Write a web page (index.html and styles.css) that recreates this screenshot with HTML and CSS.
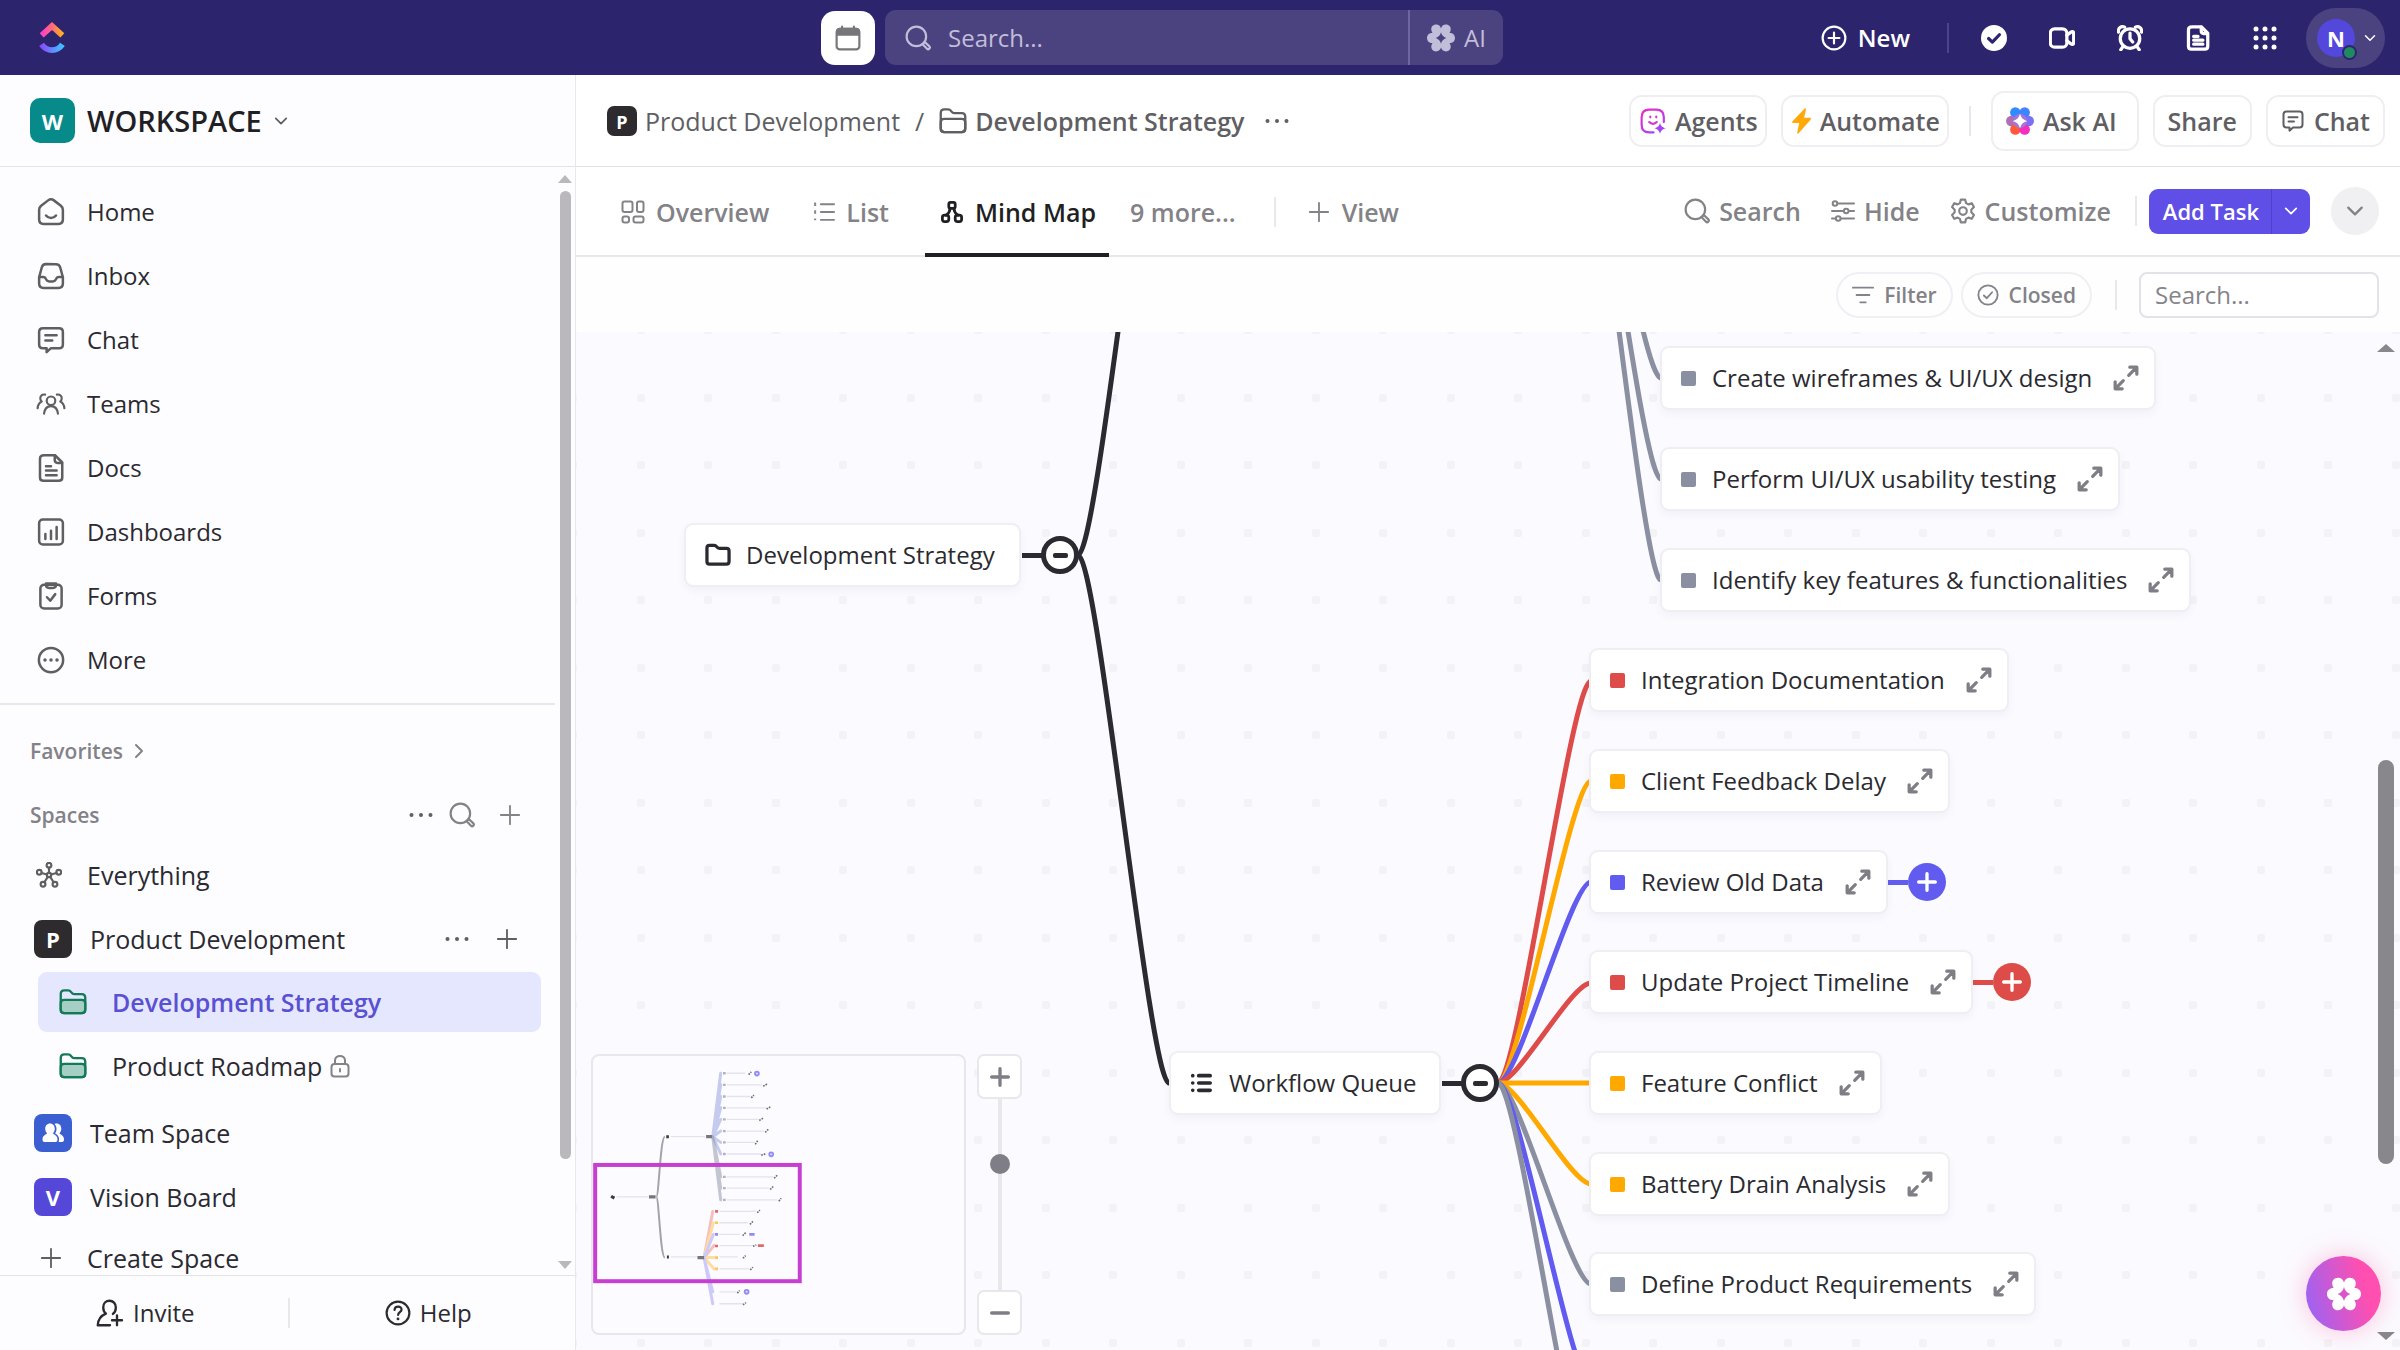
FILE: index.html
```
<!DOCTYPE html>
<html lang="en">
<head>
<meta charset="utf-8">
<title>Development Strategy</title>
<meta name="viewport" content="width=device-width, initial-scale=1">
<link rel="stylesheet" href="styles.css">
</head>
<body>
<svg class="sprite" aria-hidden="true">
  <defs>
    <linearGradient id="logo-top" x1="0" y1="0" x2="1" y2="0"><stop offset="0" stop-color="#ff3fc8"/><stop offset=".5" stop-color="#ff6a7a"/><stop offset="1" stop-color="#ffb21c"/></linearGradient>
    <linearGradient id="logo-bottom" x1="0" y1="0" x2="1" y2="0"><stop offset="0" stop-color="#8a4bff"/><stop offset="1" stop-color="#3fc0ff"/></linearGradient>
    <linearGradient id="agent" x1="0" y1="0" x2=".6" y2="1"><stop offset="0" stop-color="#f02bc0"/><stop offset="1" stop-color="#a445f2"/></linearGradient>
    <symbol id="i-home" viewBox="0 0 24 24"><path d="M2.5 10.2c0-1.4.5-2.3 1.6-3.2l5.6-4.3c1.5-1.1 3.1-1.1 4.6 0L19.900 7c1.100.9 1.600 1.800 1.600 3.200V18c0 2.600-1 3.500-3.500 3.500H6c-2.500 0-3.500-.9-3.500-3.500z"/><path d="M8 14.800c2 2.600 6 2.600 8 0"/></symbol>
    <symbol id="i-inbox" viewBox="0 0 24 24"><path d="M2.500 13 4.600 5.200C5.100 3.300 6 2.500 8 2.500h8c2 0 2.900.8 3.400 2.700L21.500 13v5c0 2.600-1 3.500-3.500 3.500H6c-2.500 0-3.500-.9-3.500-3.500z"/><path d="M2.500 12.800h3.200c1.300 0 1.900.6 2.300 1.700.5 1.200 1.200 1.800 2.500 1.800h3c1.300 0 2-.6 2.500-1.800.4-1.100 1-1.700 2.300-1.700h3.200"/></symbol>
    <symbol id="i-chat" viewBox="0 0 24 24"><path d="M5.500 2.500h13c2 0 3 1 3 3v10c0 2-1 3-3 3H12l-3.500 3.200v-3.200h-3c-2 0-3-1-3-3v-10c0-2 1-3 3-3z"/><path d="M7.500 8.200h9M7.500 12.400h5.500"/></symbol>
    <symbol id="i-teams" viewBox="0 0 28 24"><circle cx="14" cy="9" r="4"/><path d="M7.500 21c.6-4.600 3-7 6.500-7s5.900 2.400 6.500 7M8.500 3.200C5.500 2.800 3.800 4.500 4 7c.1 1.200.6 2 1.300 2.700C3 10.800 1.800 12.800 1.500 16M19.500 3.200C22.500 2.800 24.200 4.500 24 7c-.1 1.200-.6 2-1.300 2.700 2.300 1.100 3.500 3.100 3.800 6.300"/></symbol>
    <symbol id="i-doc" viewBox="0 0 24 24"><path d="M6.500 1.800h8.700L21 7.600v11.900c0 1.900-.9 2.700-2.800 2.700H6c-1.900 0-2.800-.8-2.800-2.700V4.500c0-1.900 1-2.700 3.300-2.700z"/><path d="M15 2v3.600c0 1.600.7 2.300 2.300 2.300h3.500M8 10.500h4M8 14h8.500M8 17.700h8.500"/></symbol>
    <symbol id="i-dash" viewBox="0 0 24 24"><rect x="2.500" y="2" width="19" height="20" rx="3"/><path d="M7.500 13.500v4M12 11v6.500M16.500 8v9.500"/></symbol>
    <symbol id="i-form" viewBox="0 0 24 24"><rect x="3.500" y="3" width="17" height="19" rx="3"/><path d="M8 2h8v1c0 1.700-.8 2.500-2.500 2.500h-3C8.800 5.500 8 4.700 8 3zM8.800 13l2.600 2.800 4-5.300"/></symbol>
    <symbol id="i-more" viewBox="0 0 24 24"><circle cx="12" cy="12" r="9.700"/><g fill="currentColor" stroke="none"><circle cx="7.200" cy="12" r="1.400"/><circle cx="12" cy="12" r="1.400"/><circle cx="16.800" cy="12" r="1.400"/></g></symbol>
    <symbol id="i-dots" viewBox="0 0 24 24"><g fill="currentColor" stroke="none"><circle cx="2.500" cy="12" r="2"/><circle cx="12" cy="12" r="2"/><circle cx="21.500" cy="12" r="2"/></g></symbol>
    <symbol id="i-search" viewBox="0 0 24 24"><circle cx="10.500" cy="10.500" r="9"/><path d="m17 17 1.300-1.300 4.200 4c1.300 1.500-.8 3.500-2.200 2.200L16.500 18"/></symbol>
    <symbol id="i-plus" viewBox="0 0 24 24"><path d="M12 2v20M2 12h20"/></symbol>
    <symbol id="i-minus" viewBox="0 0 24 24"><path d="M2 12h20"/></symbol>
    <symbol id="i-down" viewBox="0 0 24 24"><path d="m3 7.500 9 9 9-9"/></symbol>
    <symbol id="i-right" viewBox="0 0 24 24"><path d="m7.500 3 9 9-9 9"/></symbol>
    <symbol id="i-hub" viewBox="0 0 24 24"><circle cx="12" cy="12" r="2"/><circle cx="12" cy="3" r="2.200"/><circle cx="3" cy="9.500" r="2.200"/><circle cx="21" cy="9.500" r="2.200"/><circle cx="6.500" cy="20.500" r="2.200"/><circle cx="17.500" cy="20.500" r="2.200"/><path d="M12 5.200V10M5.100 10.200l5 1.300M18.900 10.200l-5 1.300M7.700 18.700l3.200-5M16.300 18.700l-3.200-5"/></symbol>
    <symbol id="i-folder" viewBox="0 0 24 24"><path d="M1.500 5c0-2.200.9-3 3-3h3.200c1.600 0 2 .4 2.900 1.700.8 1.200 1.300 1.500 2.700 1.500H19.500c2.200 0 3 .9 3 3V18.500c0 2.200-.8 3-3 3h-15c-2.200 0-3-.8-3-3z"/><path class="folder-front" d="M1.500 13c0-2.200.8-2.800 3-2.800h15c2.200 0 3 .6 3 2.800v5.500c0 2.200-.8 3-3 3h-15c-2.200 0-3-.8-3-3z"/></symbol>
    <symbol id="i-folder-plain" viewBox="0 0 24 24"><path d="M1.800 5.500c0-1.700.7-2.400 2.400-2.400h4.300c1.300 0 1.700.5 2.400 1.400.7 1 1.200 1.300 2.400 1.300h6.500c1.700 0 2.400.7 2.400 2.400v9.800c0 1.700-.7 2.400-2.400 2.400H4.200c-1.700 0-2.400-.7-2.400-2.400z"/></symbol>
    <symbol id="i-lock" viewBox="0 0 20 24"><rect x="1.500" y="10" width="17" height="12.500" rx="3"/><path d="M5 10V6.500c0-6 10-6 10 0V10M10 15v2.500"/></symbol>
    <symbol id="i-people" viewBox="0 0 24 24"><g fill="currentColor" stroke="none"><path d="M9 2.500c3 0 4.800 2.300 4.800 5.300 0 1.900-.7 3.400-1.800 4.500.4 1.200 4.500 2 4.500 6 0 1.700-.5 2.700-2 2.700h-11c-1.500 0-2-1-2-2.700 0-4 4.100-4.800 4.500-6-1.100-1.100-1.800-2.600-1.800-4.500C4.200 4.800 6 2.500 9 2.500z"/><path d="M13.500 3c.7-.4 1.500-.5 2.200-.5 2.900 0 4.600 2.300 4.600 5.300 0 1.900-.7 3.400-1.800 4.500.4 1.200 4.500 2 4.500 6 0 1.700-.5 2.700-2 2.700h-3.400c.3-.8.500-1.600.5-2.700 0-3-1.600-4.700-4-5.900 1-1.300 1.400-2.800 1.400-4.600 0-1.900-.7-3.600-2-4.800z"/></g></symbol>
    <symbol id="i-invite" viewBox="0 0 24 24"><path d="M14.500 12.800C16.200 11.400 17 9.500 17 7.200 17 3.900 14.700 1.500 11.600 1.500S6.200 3.900 6.200 7.200c0 2.200.8 4 2.300 5.400-4.400 1.800-6.700 4.700-7 9.900H12M18 14v8.500M13.700 18.200h8.600"/></symbol>
    <symbol id="i-help" viewBox="0 0 24 24"><circle cx="12" cy="12" r="10.500"/><path d="M8.800 9.200c.2-4.200 6.600-4 6.500-.3-.1 2.300-3.200 2.500-3.200 4.900"/><circle cx="12" cy="17.500" r="1.300" fill="currentColor" stroke="none"/></symbol>
    <symbol id="i-calendar" viewBox="0 0 24 24"><rect x="1.500" y="3.500" width="21" height="19" rx="3"/><path fill="currentColor" d="M2 9V6c0-2 1-2.500 3-2.500h14c2 0 3 .5 3 2.500v3zM6.500 1.500V5M17.500 1.500V5"/></symbol>
    <symbol id="i-flower" viewBox="0 0 24 24"><path fill="currentColor" stroke="none" fill-rule="evenodd" d="M7.800.5c2.300 0 3.600 1.400 4.200 3.300.6-1.900 1.900-3.300 4.200-3.300 2.700 0 4.400 2 4.100 4.600-.1 1-.5 1.800-1 2.600C22 7.600 24 9.300 24 12s-2 4.400-4.700 4.300c.5.800.9 1.600 1 2.600.3 2.600-1.400 4.600-4.100 4.600-2.300 0-3.600-1.400-4.200-3.300-.6 1.900-1.900 3.300-4.200 3.300-2.700 0-4.400-2-4.100-4.600.1-1 .5-1.800 1-2.600C2 16.400 0 14.700 0 12s2-4.400 4.700-4.300c-.5-.8-.9-1.600-1-2.600C3.400 2.500 5.100.5 7.800.5zM12 7c-.6 2.500-2 4-4.500 5 2.500 1 3.900 2.500 4.500 5 .6-2.500 2-4 4.500-5-2.500-1-3.900-2.500-4.500-5z"/></symbol>
    <symbol id="i-flower-color" viewBox="0 0 24 24"><g stroke="none"><circle cx="8" cy="4.700" r="4.500" fill="#2f8cff"/><circle cx="16" cy="4.700" r="4.500" fill="#3f83ff"/><circle cx="19.500" cy="12" r="4.500" fill="#7a70f5"/><circle cx="4.500" cy="12" r="4.500" fill="#b06fb5"/><circle cx="8" cy="19.300" r="4.500" fill="#ff5a3c"/><circle cx="16" cy="19.300" r="4.500" fill="#f32fc0"/><circle cx="12" cy="12" r="6" fill="#a377d8"/><path d="M12 5.500c.8 3.700 2.700 5.600 6.500 6.500-3.800.9-5.700 2.800-6.500 6.500-.8-3.700-2.700-5.600-6.500-6.500 3.800-.9 5.700-2.800 6.500-6.500z" fill="#fff"/></g></symbol>
    <symbol id="i-add-circle" viewBox="0 0 24 24"><circle cx="12" cy="12" r="10.500"/><path d="M12 7v10M7 12h10"/></symbol>
    <symbol id="i-check-solid" viewBox="0 0 24 24"><circle cx="12" cy="12" r="12" fill="currentColor" stroke="none"/><path class="check-cut" d="m7 12.500 3.500 3.300L17 9"/></symbol>
    <symbol id="i-check-ring" viewBox="0 0 24 24"><circle cx="12" cy="12" r="10.500"/><path d="m7.500 12.500 3.200 3L16.500 9"/></symbol>
    <symbol id="i-video" viewBox="0 0 24 24"><rect x="1.200" y="3.500" width="15.300" height="17" rx="4"/><path d="M16.500 9.500 20 6.800c1.600-1.100 2.800-.6 2.800 1.200v8c0 1.800-1.200 2.300-2.800 1.200l-3.500-2.700"/></symbol>
    <symbol id="i-alarm" viewBox="0 0 24 24"><circle cx="12" cy="12.500" r="9"/><path d="M12 7.500v5.200l2.500 3M1.300 6.500C.8 3 4 .5 7 2M22.700 6.500C23.200 3 20 .5 17 2M5.800 19.500 3.500 22.800M18.200 19.500l2.300 3.300"/></symbol>
    <symbol id="i-grid" viewBox="0 0 24 24"><g fill="currentColor" stroke="none"><circle cx="3" cy="3" r="2.500"/><circle cx="12" cy="3" r="2.500"/><circle cx="21" cy="3" r="2.500"/><circle cx="3" cy="12" r="2.500"/><circle cx="12" cy="12" r="2.500"/><circle cx="21" cy="12" r="2.500"/><circle cx="3" cy="21" r="2.500"/><circle cx="12" cy="21" r="2.500"/><circle cx="21" cy="21" r="2.500"/></g></symbol>
    <symbol id="i-agent" viewBox="0 0 24 24"><path stroke="url(#agent)" d="M12.500 22.500H8.500c-4.500 0-7-2.500-7-7v-7c0-4.500 2.500-7 7-7h6.500c4.500 0 7 2.500 7 7v4.500"/><path stroke="#d637cf" d="M9.500 8v.6M15 8v.6M8.500 13c2 2.200 5 2.200 7 0"/><path fill="#a445f2" stroke="none" d="M18.500 13.500c.8 3 2 4.400 5.500 5.200-3.500.8-4.700 2.200-5.500 5.300-.8-3.100-2-4.500-5.500-5.300 3.500-.8 4.700-2.200 5.500-5.200z"/></symbol>
    <symbol id="i-bolt" viewBox="0 0 18 24"><path fill="#ffa90a" stroke="none" d="M11.800.5c1-.9 1.700-.4 1.400.8L11.500 9h5.300c1.200 0 1.500.8.800 1.700L6.500 23.300c-.9 1.100-1.800.7-1.500-.7L6.800 14H1.300C.1 14-.2 13.200.5 12.300z"/></symbol>
    <symbol id="i-overview" viewBox="0 0 24 24"><rect x="1.500" y="1.500" width="10" height="10.500" rx="2"/><rect x="16" y="1.500" width="6.500" height="10.500" rx="2"/><rect x="1.500" y="16.500" width="6.500" height="6" rx="2"/><rect x="12.500" y="16.500" width="10" height="6" rx="2"/></symbol>
    <symbol id="i-list" viewBox="0 0 24 24"><path d="M8.500 3.500H23M8.500 12H23M8.500 20.500H23M2 2.500h.6M2 11h.6M2 20h.6M2 4.500h.6M2 13h.6"/></symbol>
    <symbol id="i-list-bold" viewBox="0 0 24 24"><path d="M9.500 4H22M9.500 12H22M9.500 20H22M3 4h.01M3 12h.01M3 20h.01"/></symbol>
    <symbol id="i-mind" viewBox="0 0 24 24"><rect x="8.500" y="1.500" width="7" height="6.500" rx="2"/><rect x="1.500" y="15.500" width="7" height="7" rx="2.500"/><rect x="15.500" y="15.500" width="7" height="7" rx="2.500"/><path d="M10 8c-.4 3.500-2 6-4.500 7.500M14 8c.4 3.500 2 6 4.500 7.500"/></symbol>
    <symbol id="i-sliders" viewBox="0 0 24 24"><path d="M7 4.500h16M1 12h11.500M18 12h5M10 19.500h13M1 19.500h3"/><circle cx="4" cy="4.500" r="2.300"/><circle cx="15.200" cy="12" r="2.300"/><circle cx="7.200" cy="19.500" r="2.300"/></symbol>
    <symbol id="i-gear" viewBox="0 0 24 24"><circle cx="12" cy="12" r="3.500"/><path d="M10 1.500h4l.8 3.200 2.200 1.200 3.100-1.100 2 3.500L19.700 10.800v2.400l2.400 2.500-2 3.500-3.100-1.100-2.200 1.200-.8 3.200h-4l-.8-3.200L7 18.100l-3.100 1.100-2-3.500 2.400-2.500v-2.400L1.900 8.300l2-3.500L7 5.900l2.200-1.200z"/></symbol>
    <symbol id="i-filter" viewBox="0 0 24 24"><path d="M1 4h22M5 12h14M9 20h6"/></symbol>
    <symbol id="i-expand" viewBox="0 0 24 24"><path d="M14.500 9.500 21.500 2.500M15.500 2h6.500v6.500M9.500 14.500l-7 7M8.500 22H2v-6.500"/></symbol>
  </defs>
</svg>

<div class="app">
  <header class="topbar">
    <a class="logo" href="#" aria-label="Home page">
      <svg viewBox="0 0 24 30"><path d="M2.300 12.500 12 3.800l9.700 8.700" fill="none" stroke="url(#logo-top)" stroke-width="5.500"/><path d="M2.200 21c5.200 7.200 14.400 7.200 19.600 0" fill="none" stroke="url(#logo-bottom)" stroke-width="5.500"/></svg>
    </a>
    <div class="topbar-center">
      <button class="cal-btn" aria-label="Calendar"><svg class="icon s26"><use href="#i-calendar"/></svg></button>
      <form class="global-search" role="search">
        <label class="search-field"><svg class="icon s26"><use href="#i-search"/></svg><input type="text" placeholder="Search..." aria-label="Search everything"></label>
        <button type="button" class="ai-btn"><svg class="icon s28"><use href="#i-flower"/></svg>AI</button>
      </form>
    </div>
    <div class="topbar-right">
      <button class="new-btn"><svg class="icon s26"><use href="#i-add-circle"/></svg>New</button>
      <span class="top-sep"></span>
      <nav class="top-icons" aria-label="Tools">
        <button aria-label="Tasks"><svg class="icon s26"><use href="#i-check-solid"/></svg></button>
        <button aria-label="Clips"><svg class="icon s26"><use href="#i-video"/></svg></button>
        <button aria-label="Reminders"><svg class="icon s26"><use href="#i-alarm"/></svg></button>
        <button aria-label="Notepad"><svg class="icon s26"><use href="#i-doc"/></svg></button>
        <button aria-label="Apps"><svg class="icon s24"><use href="#i-grid"/></svg></button>
      </nav>
      <button class="user-btn" aria-label="Account"><span class="user-avatar">N<i class="presence"></i></span><svg class="icon s12 heavy"><use href="#i-down"/></svg></button>
    </div>
  </header>

  <aside class="sidebar">
    <button class="workspace"><span class="ws-avatar">W</span><span class="ws-name">WORKSPACE</span><svg class="icon s14 heavy"><use href="#i-down"/></svg></button>
    <div class="side-scroll">
      <div class="side-content">
        <nav class="main-nav" aria-label="Main">
          <a href="#"><svg class="icon s30"><use href="#i-home"/></svg>Home</a>
          <a href="#"><svg class="icon s30"><use href="#i-inbox"/></svg>Inbox</a>
          <a href="#"><svg class="icon s30"><use href="#i-chat"/></svg>Chat</a>
          <a href="#"><svg class="icon s30"><use href="#i-teams"/></svg>Teams</a>
          <a href="#"><svg class="icon s30"><use href="#i-doc"/></svg>Docs</a>
          <a href="#"><svg class="icon s30"><use href="#i-dash"/></svg>Dashboards</a>
          <a href="#"><svg class="icon s30"><use href="#i-form"/></svg>Forms</a>
          <a href="#"><svg class="icon s30"><use href="#i-more"/></svg>More</a>
        </nav>
        <button class="favorites">Favorites<svg class="icon s16 heavy"><use href="#i-right"/></svg></button>
        <div class="spaces-head">
          <span>Spaces</span>
          <span class="row-tools">
            <button aria-label="Space options"><svg class="icon s24"><use href="#i-dots"/></svg></button>
            <button aria-label="Search spaces"><svg class="icon s26"><use href="#i-search"/></svg></button>
            <button aria-label="Add space"><svg class="icon s22"><use href="#i-plus"/></svg></button>
          </span>
        </div>
        <nav class="spaces" aria-label="Spaces">
          <a class="plain" href="#"><svg class="icon s26"><use href="#i-hub"/></svg>Everything</a>
          <div class="space-row">
            <a href="#"><span class="sp-avatar dark">P</span>Product Development</a>
            <span class="row-tools">
              <button aria-label="Options"><svg class="icon s24"><use href="#i-dots"/></svg></button>
              <button aria-label="Add"><svg class="icon s22"><use href="#i-plus"/></svg></button>
            </span>
          </div>
          <a class="folder active" href="#" aria-current="page"><svg class="icon s28 green"><use href="#i-folder"/></svg>Development Strategy</a>
          <a class="folder" href="#"><svg class="icon s28 green"><use href="#i-folder"/></svg>Product Roadmap<svg class="icon lock"><use href="#i-lock"/></svg></a>
          <a class="spaced" href="#"><span class="sp-avatar blue"><svg class="icon s24"><use href="#i-people"/></svg></span>Team Space</a>
          <a href="#"><span class="sp-avatar violet">V</span>Vision Board</a>
          <a class="plain create" href="#"><svg class="icon s22"><use href="#i-plus"/></svg>Create Space</a>
        </nav>
      </div>
      <div class="scrollbar side-bar" aria-hidden="true"><i class="up"></i><i class="thumb"></i><i class="down"></i></div>
    </div>
    <footer class="side-foot">
      <button><svg class="icon s28"><use href="#i-invite"/></svg>Invite</button>
      <button><svg class="icon s26"><use href="#i-help"/></svg>Help</button>
    </footer>
  </aside>

  <main class="main">
    <div class="crumb-bar">
      <nav class="crumbs" aria-label="Breadcrumb">
        <a href="#"><span class="cr-avatar">P</span>Product Development</a>
        <span class="slash">/</span>
        <a class="current" href="#"><svg class="icon s28"><use href="#i-folder"/></svg>Development Strategy</a>
        <button class="crumb-more" aria-label="More"><svg class="icon s24"><use href="#i-dots"/></svg></button>
      </nav>
      <div class="crumb-actions">
        <button class="pill snug"><svg class="icon s26"><use href="#i-agent"/></svg>Agents</button>
        <button class="pill snug"><svg class="icon bolt"><use href="#i-bolt"/></svg>Automate</button>
        <span class="sep"></span>
        <button class="pill ask"><svg class="icon s28"><use href="#i-flower-color"/></svg>Ask AI</button>
        <button class="pill">Share</button>
        <button class="pill"><svg class="icon s24"><use href="#i-chat"/></svg>Chat</button>
      </div>
    </div>

    <div class="tab-bar">
      <nav class="tabs" aria-label="Views">
        <a href="#"><svg class="icon s24"><use href="#i-overview"/></svg>Overview</a>
        <a href="#"><svg class="icon s22"><use href="#i-list"/></svg>List</a>
        <a class="active" href="#" aria-current="page"><svg class="icon s22 heavy"><use href="#i-mind"/></svg>Mind Map</a>
        <button>9 more...</button>
        <span class="sep"></span>
        <button><svg class="icon s22"><use href="#i-plus"/></svg>View</button>
      </nav>
      <div class="tab-tools">
        <button><svg class="icon s26"><use href="#i-search"/></svg>Search</button>
        <button><svg class="icon s24"><use href="#i-sliders"/></svg>Hide</button>
        <button><svg class="icon s26"><use href="#i-gear"/></svg>Customize</button>
        <span class="sep"></span>
        <div class="add-task"><button>Add Task</button><button aria-label="Task types"><svg class="icon s14 heavy"><use href="#i-down"/></svg></button></div>
        <button class="collapse" aria-label="Collapse"><svg class="icon s18 heavy"><use href="#i-down"/></svg></button>
      </div>
    </div>

    <div class="filter-bar">
      <button class="chip"><svg class="icon s22"><use href="#i-filter"/></svg>Filter</button>
      <button class="chip"><svg class="icon s22"><use href="#i-check-ring"/></svg>Closed</button>
      <span class="sep"></span>
      <input class="map-search" type="text" placeholder="Search..." aria-label="Search tasks">
    </div>

    <section class="canvas" aria-label="Mind map">
      <svg class="edges" aria-hidden="true">
        <defs>
          <pattern id="dots" x="61" y="62" width="135" height="135" patternUnits="userSpaceOnUse"><g fill="#f3f2f7"><rect width="8" height="8" rx="2"/><rect x="67" width="8" height="8" rx="2"/><rect y="67" width="8" height="8" rx="2"/><rect x="67" y="67" width="8" height="8" rx="2"/></g></pattern>
        </defs>
        <rect width="100%" height="100%" fill="url(#dots)"/>
        <g fill="none" stroke-width="5">
          <g stroke="#2b2a30">
            <path d="M502 223C522 223 573 -305 593 -305M502 223C522 223 573 751 593 751"/>
          </g>
          <g stroke="#8a8fa1">
            <path d="M994 -305C1014 -305 1065 46 1085 46M994 -305C1014 -305 1065 147 1085 147M994 -305C1014 -305 1065 248 1085 248"/>
          </g>
          <path stroke="#de4c49" d="M922 751C942 751 995 349 1015 349"/>
          <path stroke="#ffa900" d="M922 751C942 751 995 449 1015 449"/>
          <path stroke="#625bf0" d="M922 751C942 751 995 550 1015 550"/>
          <path stroke="#de4c49" d="M922 751C942 751 995 651 1015 651"/>
          <path stroke="#ffa900" d="M922 751H1015M922 751C942 751 995 852 1015 852"/>
          <path stroke="#8a8fa1" d="M922 751C942 751 995 952 1015 952"/>
          <path stroke="#625bf0" d="M922 751C942 751 995 1053 1015 1053"/>
          <path stroke="#8a8fa1" d="M922 751C942 751 995 1153 1015 1153"/>
        </g>
      </svg>

      <div class="node root" style="left:108px;top:191px"><div class="box"><svg class="icon s26 heavy"><use href="#i-folder-plain"/></svg>Development Strategy</div><button class="toggle" aria-label="Collapse branch"></button></div>
      <div class="node branch" style="left:593px;top:719px"><div class="box"><svg class="icon s22 bold"><use href="#i-list-bold"/></svg>Workflow Queue</div><button class="toggle" aria-label="Collapse branch"></button></div>

      <div class="node gray" style="left:1084px;top:14px"><div class="box"><i class="status"></i>Create wireframes &amp; UI/UX design<button aria-label="Open"><svg class="icon s26"><use href="#i-expand"/></svg></button></div></div>
      <div class="node gray" style="left:1084px;top:115px"><div class="box"><i class="status"></i>Perform UI/UX usability testing<button aria-label="Open"><svg class="icon s26"><use href="#i-expand"/></svg></button></div></div>
      <div class="node gray" style="left:1084px;top:216px"><div class="box"><i class="status"></i>Identify key features &amp; functionalities<button aria-label="Open"><svg class="icon s26"><use href="#i-expand"/></svg></button></div></div>
      <div class="node red" style="left:1013px;top:316px"><div class="box"><i class="status"></i>Integration Documentation<button aria-label="Open"><svg class="icon s26"><use href="#i-expand"/></svg></button></div></div>
      <div class="node amber" style="left:1013px;top:417px"><div class="box"><i class="status"></i>Client Feedback Delay<button aria-label="Open"><svg class="icon s26"><use href="#i-expand"/></svg></button></div></div>
      <div class="node indigo" style="left:1013px;top:518px"><div class="box"><i class="status"></i>Review Old Data<button aria-label="Open"><svg class="icon s26"><use href="#i-expand"/></svg></button></div><button class="grow" aria-label="Expand subtasks"><svg class="icon s20"><use href="#i-plus"/></svg></button></div>
      <div class="node red" style="left:1013px;top:618px"><div class="box"><i class="status"></i>Update Project Timeline<button aria-label="Open"><svg class="icon s26"><use href="#i-expand"/></svg></button></div><button class="grow" aria-label="Expand subtasks"><svg class="icon s20"><use href="#i-plus"/></svg></button></div>
      <div class="node amber" style="left:1013px;top:719px"><div class="box"><i class="status"></i>Feature Conflict<button aria-label="Open"><svg class="icon s26"><use href="#i-expand"/></svg></button></div></div>
      <div class="node amber" style="left:1013px;top:820px"><div class="box"><i class="status"></i>Battery Drain Analysis<button aria-label="Open"><svg class="icon s26"><use href="#i-expand"/></svg></button></div></div>
      <div class="node gray" style="left:1013px;top:920px"><div class="box"><i class="status"></i>Define Product Requirements<button aria-label="Open"><svg class="icon s26"><use href="#i-expand"/></svg></button></div></div>

      <div class="map-controls">
        <div class="minimap">
          <svg viewBox="38 76 1116 834" fill="none" aria-hidden="true">
            <g stroke="#8e8d93" stroke-width="6" opacity=".8"><path d="M228 500C236 500 240 319 254 319M228 500C236 500 240 683 254 683"/></g>
            <g stroke-width="9" stroke-linecap="round">
              <g stroke="#8b9be0" opacity=".5"><path d="M398 319 422 128M398 319l24-157M398 319l24-121M398 319l24-87M398 319l24-52M398 319l24-17M398 319l24 17M398 319l24 52"/></g>
              <g stroke="#8a8fa1" opacity=".5"><path d="M398 319 422 440M398 319l24 155M398 319l24 190"/></g>
              <g opacity=".55"><path stroke="#ee8f83" d="M372 683 398 544M372 683l30-37"/><path stroke="#ffc45a" d="M372 683 400 578M372 683h30M372 683l30 34"/><path stroke="#a7a3f5" d="M372 683 400 613M372 683 398 786M372 683 398 822"/></g>
            </g>
            <g stroke="#e4e3ea" stroke-width="4"><path d="M108 500H204M272 319H376M272 681H350M440 128h56M440 163h106M440 198h72M440 232h120M440 267h96M440 302h112M440 336h84M440 371h104M440 440h140M440 474h128M440 509h152M418 544h110M418 578h86M418 613h62M418 647h100M418 681h56M418 717h90M418 786h50M418 822h70"/></g>
            <g stroke="#b3b2ba" stroke-width="7"><path d="M429 128h8M429 163h8M429 198h8M429 232h8M429 267h8M429 302h8M429 336h8M429 371h8M429 440h8M429 474h8M429 509h8"/></g>
            <g stroke="#6f6e75" stroke-width="5" stroke-dasharray="5 3"><path d="M506 132l8-8M550 167l14-8M514 202l8-8M560 236l14-8M538 270l14-8M556 306l10-10M526 342l8-12M544 375l14-5M583 444l9-9M571 478l9-9M597 513l7-9M532 548l8-8M510 583l9-9M488 617l9-9M519 649l10-4M489 685l8-8M511 720l8-8M472 790l7-8M489 825l9-6"/></g>
            <g stroke="#3a393f" stroke-width="9"><path d="M92 498l10 6M258 319h8M260 681h6"/></g>
            <g stroke="#77767c" stroke-width="10"><path d="M206 500h20M378 319h18M352 683h20"/></g>
            <g stroke-width="8"><path stroke="#ffc45a" d="M405 578h9M405 683h9M405 717h9"/><path stroke="#de6a67" d="M405 544h9M405 648h9M534 647h18"/><path stroke="#8f8af5" d="M405 613h9M508 613h16"/></g>
            <g stroke="#8f8af5" stroke-width="5" fill="#d9d7fc"><circle cx="531" cy="129" r="6"/><circle cx="574" cy="372" r="6"/><circle cx="500" cy="786" r="6"/></g>
            <rect x="44" y="404" width="616" height="350" stroke="#c63fd0" stroke-width="12"/>
          </svg>
        </div>
        <div class="zoomer">
          <button aria-label="Zoom in"><svg class="icon s20 bold"><use href="#i-plus"/></svg></button>
          <input type="range" min="0" max="100" value="68" aria-label="Zoom level">
          <button aria-label="Zoom out"><svg class="icon s20 bold"><use href="#i-minus"/></svg></button>
        </div>
      </div>
      <div class="scrollbar map-bar" aria-hidden="true"><i class="up"></i><i class="thumb"></i><i class="down"></i></div>
      <button class="fab" aria-label="AI assistant"><svg class="icon s34"><use href="#i-flower"/></svg></button>
    </section>
  </main>
</div>
</body>
</html>
```
FILE: styles.css
```
:root {
  --ink: #2a2a30;
  --mid: #5f5e63;
  --soft: #838287;
  --line: #e8e7ec;
  --violet: #5f4fe6;
}
*, *::before, *::after { box-sizing: border-box; }
html, body { margin: 0; height: 100%; }
body {
  font-family: "Open Sans", "Noto Sans", sans-serif;
  font-size: 24px;
  line-height: 32px;
  color: var(--ink);
  background: #fff;
}
button, input { font: inherit; color: inherit; margin: 0; }
button { background: none; border: 0; padding: 0; display: inline-flex; align-items: center; white-space: nowrap; cursor: pointer; }
a { color: inherit; text-decoration: none; display: flex; align-items: center; white-space: nowrap; }
.sprite { position: absolute; width: 0; height: 0; }

.icon { flex: none; fill: none; stroke: currentColor; stroke-width: 2; stroke-linecap: round; stroke-linejoin: round; overflow: visible; }
.heavy { stroke-width: 3; }
.bold { stroke-width: 4; }
.s12 { width: 12px; height: 12px; }
.s14 { width: 14px; height: 14px; }
.s16 { width: 16px; height: 16px; }
.s18 { width: 18px; height: 18px; }
.s20 { width: 20px; height: 20px; }
.s22 { width: 22px; height: 22px; }
.s24 { width: 24px; height: 24px; }
.s26 { width: 26px; height: 26px; }
.s28 { width: 28px; height: 28px; }
.s30 { width: 30px; height: 30px; }
.s34 { width: 34px; height: 34px; }
.check-cut { stroke: #2c256e; stroke-width: 3; }
.folder-front { fill: var(--folder-fill, none); }
.sep { width: 2px; height: 30px; background: var(--line); flex: none; }

.app { display: grid; grid-template: 75px minmax(0, 1fr) / 576px minmax(0, 1fr); height: 100vh; }

/* Top bar */
.topbar {
  grid-column: 1 / -1;
  display: grid;
  grid-template-columns: 1fr auto 1fr;
  align-items: center;
  background: #2c256e;
  color: #fff;
  padding: 0 15px 0 39px;
}
.logo svg { width: 26px; height: 32px; }
.topbar-center { display: flex; align-items: center; gap: 10px; padding-right: 100px; }
.cal-btn { width: 54px; height: 54px; border-radius: 14px; background: #fff; color: #77767b; justify-content: center; }
.global-search { display: flex; width: 618px; height: 55px; border-radius: 11px; background: #4b4380; color: #c2bed9; overflow: hidden; }
.search-field { flex: 1; display: flex; align-items: center; gap: 17px; padding-left: 20px; }
.search-field input { flex: 1; min-width: 0; border: 0; padding: 0; background: none; outline: 0; }
.search-field input::placeholder { color: #c2bed9; opacity: 1; }
.ai-btn { width: 95px; gap: 9px; padding-left: 17px; border-left: 2px solid #6e66a3; }
.topbar-right { display: flex; align-items: center; justify-content: flex-end; }
.new-btn { gap: 11px; font-weight: 600; }
.top-sep { width: 2px; height: 30px; background: #4c4589; margin: 0 32px 0 37px; }
.top-icons { display: flex; gap: 42px; }
.top-icons .icon { stroke-width: 3; }
.user-btn { width: 79px; height: 60px; border-radius: 30px; background: #4b4380; margin-left: 29px; padding-left: 11px; gap: 9px; }
.user-avatar { position: relative; width: 38px; height: 38px; border-radius: 50%; background: #5447dc; display: grid; place-items: center; font-size: 22px; font-weight: 700; }
.presence { position: absolute; right: -2px; bottom: -3px; width: 15px; height: 15px; border-radius: 50%; background: #1f8a61; border: 2px solid #2c256e; }

/* Sidebar */
.sidebar { display: flex; flex-direction: column; min-height: 0; background: #fdfcff; border-right: 1px solid var(--line); }
.workspace { height: 92px; border-bottom: 1px solid #e3e2e6; padding: 0 30px; gap: 12px; flex: none; }
.workspace .icon { color: var(--mid); }
.ws-avatar { width: 45px; height: 45px; border-radius: 10px; background: #078b8a; color: #fff; font-size: 22px; font-weight: 700; display: grid; place-items: center; }
.ws-name { font-size: 29px; font-weight: 600; color: #1f1f24; }
.side-scroll { flex: 1; min-height: 0; display: flex; overflow: hidden; }
.side-content { flex: 1; min-width: 0; }
.main-nav { padding: 13px 0 11px 36px; border-bottom: 2px solid var(--line); }
.main-nav a { height: 64px; gap: 21px; }
.main-nav .icon, .plain .icon { color: var(--mid); }
.favorites, .spaces-head { font-size: 21px; font-weight: 600; color: var(--soft); padding-left: 30px; }
.favorites { display: flex; height: 64px; margin-top: 14px; gap: 8px; }
.spaces-head { display: flex; align-items: center; justify-content: space-between; height: 60px; padding-top: 4px; padding-right: 34px; }
.row-tools { display: flex; align-items: center; color: var(--mid); }
.spaces-head .row-tools { gap: 16px; }
.spaces-head .row-tools button + button { color: var(--soft); }
.spaces-head .row-tools button:last-child { margin-left: 8px; }
.space-row .row-tools { gap: 27px; }
.spaces { font-size: 25px; }
.spaces > a, .space-row { height: 64px; padding-left: 34px; gap: 18px; }
.space-row { display: flex; align-items: center; justify-content: space-between; padding-right: 37px; }
.space-row a { gap: 18px; }
.spaces .plain { padding-left: 36px; gap: 25px; }
.spaces .create { height: 30px; margin-top: 14px; padding-left: 40px; line-height: 28px; }
.sp-avatar { width: 38px; height: 38px; border-radius: 8px; color: #fff; font-size: 22px; font-weight: 700; display: grid; place-items: center; }
.dark { background: #2e2b2f; }
.blue { background: #3b5fd0; }
.violet { background: #5547d8; }
.spaces .folder { height: 60px; margin: 1px 14px 0 38px; padding-left: 21px; gap: 25px; border-radius: 9px; }
.spaces .active { background: #e5e7ff; color: #5a50d2; font-weight: 550; }
.spaces .folder + .folder { margin-top: 4px; }
.spaces .spaced { margin-top: 5px; }
.green { color: #127a55; --folder-fill: #a5cfc4; }
.spaces .lock { width: 20px; height: 26px; color: var(--soft); margin-left: -17px; }
.side-foot { flex: none; display: grid; grid-template-columns: 1fr 1fr; height: 75px; border-top: 1px solid #e3e2e6; align-items: center; }
.side-foot button { justify-content: center; height: 30px; gap: 9px; padding-left: 3px; }
.side-foot button + button { border-left: 2px solid var(--line); padding: 0 8px 0 0; }

/* Painted scroll bars */
.scrollbar { display: flex; flex-direction: column; align-items: center; flex: none; }
.scrollbar .thumb { flex: 1; width: 11px; border-radius: 6px; background: currentColor; }
.scrollbar .up, .scrollbar .down { width: 0; border: solid transparent; border-width: 0 7px; }
.scrollbar .up { border-bottom: 8px solid; }
.scrollbar .down { border-top: 8px solid; }
.side-bar { width: 20px; padding: 8px 0 6px; color: #bab8bc; }
.side-bar .thumb { margin: 8px 0 102px; }
.map-bar { position: absolute; right: 5px; top: 0; bottom: 0; width: 18px; padding: 12px 0 10px; color: #88878c; }
.map-bar .thumb { width: 16px; border-radius: 8px; margin: 408px 0 168px; }
.map-bar .up, .map-bar .down { border-left-width: 9px; border-right-width: 9px; }

/* Breadcrumb row */
.main { display: flex; flex-direction: column; min-width: 0; min-height: 0; }
.crumb-bar { flex: none; display: flex; align-items: center; justify-content: space-between; height: 92px; padding: 0 15px 0 31px; border-bottom: 1px solid #e3e2e6; color: var(--mid); }
.crumbs { display: flex; align-items: center; font-size: 25px; }
.crumbs a { gap: 8px; }
.slash { margin: 0 15px; }
.cr-avatar { width: 30px; height: 30px; border-radius: 7px; background: #2e2b2f; color: #fff; font-size: 18px; font-weight: 700; display: grid; place-items: center; }
.crumbs .current { font-weight: 550; }
.crumb-more { margin-left: 20px; }
.crumb-actions { display: flex; align-items: center; gap: 14px; font-size: 25px; font-weight: 550; }
.pill { height: 52px; padding: 0 13px; gap: 9px; border: 2px solid #efeef2; border-radius: 13px; }
.pill.snug { padding: 0 7px 0 9px; }
.bolt { width: 19px; height: 26px; }
.crumb-actions .sep { margin: 0 6px; }
.pill.ask { height: 60px; padding: 0 20px 0 13px; }

/* View tabs */
.tab-bar { flex: none; display: flex; justify-content: space-between; height: 90px; padding: 0 21px 0 31px; border-bottom: 2px solid var(--line); font-size: 25px; font-weight: 550; color: var(--soft); }
.tabs { display: flex; align-items: center; height: 90px; }
.tabs a { height: 100%; padding: 0 14px; gap: 11px; margin-right: 16px; }
.tabs a.active { color: #1f1f24; border-bottom: 4px solid #1f1f24; border-top: 4px solid transparent; margin: 0 21px 0 6px; padding: 0 13px 0 16px; gap: 12px; font-weight: 600; }
.tabs .sep { margin: 0 32px 0 38px; }
.tabs button { gap: 12px; }
.tab-tools { display: flex; align-items: center; gap: 30px; }
.tab-tools button { gap: 9px; }
.tab-tools .sep { margin: 0 -18px 0 -6px; }
.add-task { display: flex; height: 45px; border-radius: 9px; background: var(--violet); color: #fff; font-size: 22px; font-weight: 600; overflow: hidden; }
.add-task button { padding: 0 12px 0 14px; }
.add-task button + button { padding: 0 12px; border-left: 1px solid #4f41c9; }
.tab-tools .collapse { width: 48px; height: 48px; border-radius: 50%; background: #f0eff2; justify-content: center; margin-left: -9px; }

/* Filter row */
.filter-bar { flex: none; display: flex; align-items: center; justify-content: flex-end; height: 75px; padding: 0 21px 0 31px; gap: 8px; background: #fefeff; color: var(--soft); }
.chip { height: 46px; border: 2px solid #f0eff3; border-radius: 23px; padding: 0 14px; gap: 10px; font-size: 21px; font-weight: 600; }
.filter-bar .sep { margin: 0 14px 0 15px; }
.map-search { width: 240px; height: 46px; border: 2px solid #e3e2e8; border-radius: 8px; padding: 0 14px; background: #fff; }
.map-search::placeholder { color: #85848a; opacity: 1; }

/* Mind map canvas */
.canvas { position: relative; flex: 1; min-height: 0; overflow: hidden; background: #fbfaff; }
.edges { position: absolute; inset: 0; width: 100%; height: 100%; }
.node { position: absolute; display: flex; align-items: center; --c: var(--ink); }
.gray { --c: #8a8fa1; }
.red { --c: #de4c49; }
.amber { --c: #ffa900; }
.indigo { --c: #625bf0; }
.box { display: flex; align-items: center; height: 64px; padding: 0 15px 0 19px; border: 2px solid #efeef3; border-radius: 9px; background: #fff; box-shadow: 0 4px 10px rgba(40, 36, 80, .04); font-weight: 500; white-space: nowrap; }
.status { width: 15px; height: 15px; border-radius: 2px; background: var(--c); margin-right: 16px; }
.box button { margin-left: 21px; color: #7f7e84; }
.box button .icon { stroke-width: 3; }
.root .box { width: 337px; gap: 15px; padding-right: 0; }
.branch .box { width: 272px; gap: 17px; padding-right: 0; }
.toggle, .grow { position: relative; margin-left: 20px; width: 38px; height: 38px; border-radius: 50%; justify-content: center; }
.toggle { border: 5px solid var(--ink); background: #fff; }
.toggle::after { content: ""; width: 15px; height: 5px; border-radius: 2px; background: var(--ink); }
.toggle::before, .grow::before { content: ""; position: absolute; right: 100%; width: 20px; height: 5px; background: var(--c); }
.toggle::before { margin-right: 4px; }
.grow { background: var(--c); color: #fff; }
.grow .icon { stroke-width: 4; }

/* Overview map and zoom */
.map-controls { position: absolute; left: 15px; bottom: 15px; display: flex; gap: 11px; }
.minimap { width: 375px; height: 281px; border: 2px solid var(--line); border-radius: 8px; background: #fcfbff; overflow: hidden; }
.minimap svg { display: block; width: 100%; height: 100%; }
.zoomer { display: flex; flex-direction: column; align-items: center; height: 281px; color: #7f7e87; }
.zoomer button { width: 45px; height: 45px; border: 2px solid var(--line); border-radius: 7px; background: #fff; justify-content: center; }
.zoomer input { appearance: none; writing-mode: vertical-lr; direction: rtl; width: 20px; flex: 1; min-height: 0; background: linear-gradient(90deg, transparent 8px, var(--line) 8px 12px, transparent 12px); }
.zoomer input::-webkit-slider-thumb { appearance: none; width: 20px; height: 20px; border-radius: 50%; background: #7f7e87; }
.fab { position: absolute; right: 19px; bottom: 19px; width: 75px; height: 75px; border-radius: 50%; justify-content: center; color: #fff; background: linear-gradient(75deg, #9a63f5 5%, #ff4fb0 75%); box-shadow: 0 0 26px rgba(255, 90, 150, .35); }
```
